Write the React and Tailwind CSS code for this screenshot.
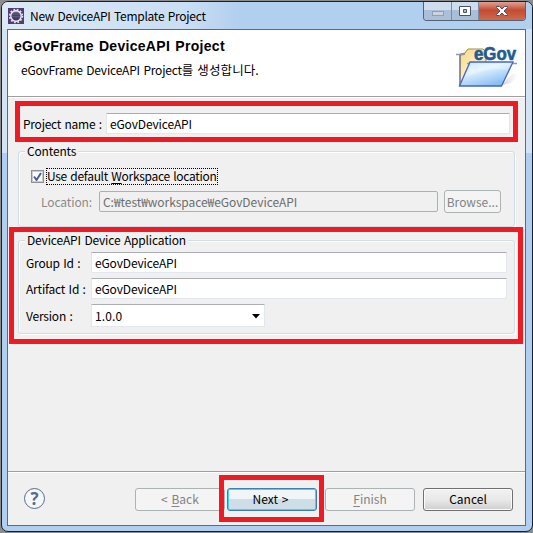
const field = "border border-[#e2e6ee] border-t-[#abadb3] bg-white text-black flex items-center rounded-[1px] pl-[3px] tracking-[-0.15px]";
const button = "h-[23px] rounded-[3px] border flex items-center justify-center pb-px";

function GearIcon() {
  return (
    <svg width="16" height="16" viewBox="0 0 16 16" className="shrink-0">
      <defs>
        <linearGradient id="gear" x1="0" y1="0" x2="0" y2="1">
          <stop offset="0" stopColor="#8f86b5" />
          <stop offset=".35" stopColor="#3d3663" />
          <stop offset=".65" stopColor="#4c4476" />
          <stop offset="1" stopColor="#302252" />
        </linearGradient>
      </defs>
      <rect width="16" height="16" fill="#4f3d78" />
      <circle cx="8" cy="8" r="6.4" fill="none" stroke="#e9e7ee" strokeWidth="1.6" strokeDasharray="1.7 1.651" />
      <circle cx="8" cy="8" r="5.2" fill="url(#gear)" stroke="#f2f1ee" strokeWidth="1.4" />
      <path d="M3.5 6.6h9M3.2 8.4h9.6" stroke="#7a76a0" strokeWidth=".5" />
    </svg>
  );
}

function EGovLogo() {
  return (
    <svg width="68" height="46" viewBox="0 0 68 46" className="shrink-0">
      <defs>
        <linearGradient id="paper" x1="0" y1="0" x2="1" y2="1">
          <stop offset="0" stopColor="#f6d57c" />
          <stop offset=".5" stopColor="#fff1c4" />
          <stop offset="1" stopColor="#f3cf72" />
        </linearGradient>
        <linearGradient id="folder" x1="0" y1="0" x2=".6" y2="1">
          <stop offset="0" stopColor="#b9dcfa" />
          <stop offset=".4" stopColor="#e2f2ff" />
          <stop offset="1" stopColor="#86bdf5" />
        </linearGradient>
        <linearGradient id="shade" x1="0" y1="0" x2="1" y2="0">
          <stop offset="0" stopColor="#aaa" />
          <stop offset="1" stopColor="#fff" stopOpacity="0" />
        </linearGradient>
      </defs>
      <path d="M47 40 57 29l10-1-11 10z" fill="url(#shade)" opacity=".6" />
      <path d="M5 40V9l5-1 3-4h15l3 3v13H18z" fill="url(#paper)" stroke="#a98c32" />
      <path d="M5 40V10l5-1" fill="none" stroke="#4960b4" />
      <path d="M1 9.500h8M12 18.500h5M57 18.500h5" fill="none" stroke="#8e98a7" strokeWidth="1.3" />
      <text x="19" y="15" textLength="42" lengthAdjust="spacingAndGlyphs" fontFamily="Liberation Sans, sans-serif" fontWeight="bold" fontSize="18" fill="#235b92" stroke="#235b92" strokeWidth=".6">eGov</text>
      <path d="M15 17h43L46.500 41H4.500z" fill="url(#folder)" stroke="#4664bd" strokeWidth="1.3" />
      <path d="M16 18.500h39l-3 7c-12-3-27 0-40 7z" fill="#fff" opacity=".25" />
    </svg>
  );
}

function WindowControls() {
  return (
    <div className="ml-auto mr-[6px] flex h-[19px] w-[103px] overflow-hidden rounded-b-[4px] border border-t-0 border-[#536377]">
      <div className="flex w-[28px] items-center justify-center border-r border-[#7b8da4] bg-linear-to-b from-[#cfddec] from-45% to-[#abc0d8] to-45%">
        <svg width="14" height="8" className="mt-[5px]"><rect x="1.5" y="1.5" width="11" height="4" fill="#cbd3dc" stroke="#939fad" /></svg>
      </div>
      <div className="flex w-[27px] items-center justify-center border-r border-[#7b8da4] bg-linear-to-b from-[#cedded] from-45% to-[#a9bfd8] to-45%">
        <svg width="13" height="12"><path d="M.5 1.500h11v9H.5zM4.500 4.500h3v3h-3z" fill="#fff" fillRule="evenodd" stroke="#4a5467" /></svg>
      </div>
      <div className="flex flex-1 items-center justify-center bg-linear-to-b from-[#dfa095] via-[#c44a33] via-45% to-[#ce6a4b]">
        <svg width="14" height="12"><path d="M1.5 1.500h3L7 4l2.500-2.500h3v1L9 6l3.500 3.500v1h-3L7 8l-2.500 2.500h-3v-1L5 6 1.500 2.500z" fill="#fff" stroke="#565063" /></svg>
      </div>
    </div>
  );
}

function HelpIcon() {
  return (
    <div className="-mt-px flex h-[21px] w-[21px] items-center justify-center rounded-full border-[1.5px] border-[#586a8e] bg-[#f6f7f9] font-['Open_Sans',sans-serif] text-[17px] leading-none font-bold text-[#586a8e]">?</div>
  );
}

function Group({ title, className, children }) {
  return (
    <fieldset className={"rounded-[3px] border border-[#d0dce6] shadow-[inset_1px_1px_0_#fff,1px_1px_0_#fff] " + className}>
      <div className="-mt-[10px] mb-px ml-[6px] h-[18px] w-max bg-[#f0f0f0] px-[2px] leading-[17px] tracking-[-0.17px]">{title}</div>
      {children}
    </fieldset>
  );
}

export default function App() {
  return (
    <div className="relative h-[533px] w-[533px] overflow-hidden bg-[#8c8c8c] pt-px pl-px font-['Noto_Sans_CJK_KR',sans-serif] text-[12px] leading-[17px] whitespace-nowrap text-black [word-spacing:1px]">
      <div className="flex h-[531px] w-[532px] flex-col rounded-[7px] border border-[#17202c] bg-linear-to-b from-[#d3e3f5] from-[151px] to-[#b0cff0] to-[151px] px-[5px]">
        <div className="-mx-[5px] flex h-[27px] shrink-0 rounded-t-[6px] bg-linear-to-r from-[#dce9f6] via-[#c9def4] via-35% to-[#b1cfef] to-45% pl-[6px]">
          <div className="flex items-center gap-[6px]">
            <GearIcon />
            <span className="tracking-[-0.27px]">New DeviceAPI Template Project</span>
          </div>
          <WindowControls />
        </div>

        <div className="flex h-[497px] w-[519px] flex-col border border-[#5c6b7c] bg-[#f0f0f0]">
          <header className="flex h-[67px] shrink-0 justify-between border-b border-[#a0a0a0] bg-white">
            <div className="pl-[6px]">
              <h1 className="mt-[8px] font-['Liberation_Sans',sans-serif] text-[14px] leading-[17px] font-bold tracking-[0.3px]">eGovFrame DeviceAPI Project</h1>
              <p className="mt-[6px] pl-[7px] tracking-[-0.2px]">eGovFrame DeviceAPI Project<span className="text-[12.5px] tracking-[0.1px]">를 생성합니다.</span></p>
            </div>
            <div className="mt-[15px] mr-[2px]"><EGovLogo /></div>
          </header>

          <main className="h-[375px] shrink-0 border-b border-[#a0a0a0] border-t border-t-white pl-[10px]">
            <div className="mt-[15px] flex h-[21px] items-center">
              <label className="w-[88px] pl-[5px] tracking-[-0.25px]">Project name :</label>
              <div className={field + " h-[21px] w-[404px]"}>eGovDeviceAPI</div>
            </div>

            <Group title="Contents" className="mt-[17px] h-[76px] w-[497px]">
              <div className="mt-[8px] ml-[12px] flex h-[17px] items-center">
                <div className="flex h-[13px] w-[13px] items-center justify-center border border-[#8e8f8f] bg-white outline outline-1 -outline-offset-2 outline-[#c8ccd2]">
                  <svg width="9" height="10"><path d="M1 4.5 3.5 8 8 1" fill="none" stroke="#4a5f97" strokeWidth="2" /></svg>
                </div>
                <div className="ml-[2px] h-[17px] w-[172px] border border-dotted border-black leading-[14px] tracking-[-0.3px]">Use default <span className="underline underline-offset-2">W</span>orkspace location</div>
              </div>
              <div className="mt-[5px] flex h-[23px] items-center text-[#8b8b8b]">
                <label className="w-[80px] pl-[22px] tracking-[-0.1px]">Location:</label>
                <div className="flex h-[21px] w-[339px] items-center rounded-[2px] border border-[#afafaf] pl-[3px] tracking-[-0.05px] text-[#6d6d6d]">C:₩test₩workspace₩eGovDeviceAPI</div>
                <div className={button + " ml-[6px] w-[57px] border-[#adb2b5] bg-[#f4f4f4] text-[#838383]"}>Browse...</div>
              </div>
            </Group>

            <Group title="DeviceAPI Device Application" className="mt-[13px] h-[94px] w-[497px]">
              <div className="mt-[3px] flex h-[21px] items-center">
                <label className="w-[72px] pl-[7px] tracking-[-0.2px]">Group Id :</label>
                <div className={field + " h-[21px] w-[416px]"}>eGovDeviceAPI</div>
              </div>
              <div className="mt-[5px] flex h-[21px] items-center">
                <label className="w-[72px] pl-[7px] tracking-[-0.2px]">Artifact Id :</label>
                <div className={field + " h-[21px] w-[416px]"}>eGovDeviceAPI</div>
              </div>
              <div className="mt-[5px] flex h-[23px] items-center">
                <label className="w-[72px] pl-[7px] tracking-[-0.2px]">Version :</label>
                <div className={field + " h-[23px] w-[174px] justify-between pr-[4px]"}>
                  <span className="tracking-[0.1px]">1.0.0</span>
                  <svg width="8" height="5" className="mt-[2px]"><path d="M0 0h8L4 4.5z" fill="#000" /></svg>
                </div>
              </div>
            </Group>
          </main>

          <footer className="flex h-[53px] items-center border-t border-white pl-[16px]">
            <HelpIcon />
            <div className={button + " ml-[90px] w-[90px] border-[#adb2b5] bg-[#f4f4f4] text-[#838383]"}><span>&lt; <u className="underline-offset-2">B</u>ack</span></div>
            <div className={button + " ml-[2px] w-[90px] border-[#3c7fb1] bg-linear-to-b from-[#f0f5f8] from-50% to-[#cfdde6] to-50% pr-[3px] shadow-[inset_0_0_0_1px_#46d2f5]"}>Next &gt;</div>
            <div className={button + " ml-[8px] w-[90px] border-[#adb2b5] bg-[#f4f4f4] text-[#838383]"}><span><u className="underline-offset-2">F</u>inish</span></div>
            <div className={button + " ml-[8px] w-[90px] border-[#707070] bg-linear-to-b from-[#f2f2f2] via-[#e9e9e9] via-50% to-[#cfcfcf] shadow-[inset_0_0_0_1px_#fafafa]"}>Cancel</div>
          </footer>
        </div>
      </div>

      <div className="absolute top-[101px] left-[15px] h-[41px] w-[503px] border-5 border-[#ed1c24]" />
      <div className="absolute top-[227px] left-[9px] h-[117px] w-[514px] border-5 border-[#ed1c24]" />
      <div className="absolute top-[475px] left-[219px] h-[47px] w-[105px] border-5 border-[#ed1c24]" />
    </div>
  );
}
